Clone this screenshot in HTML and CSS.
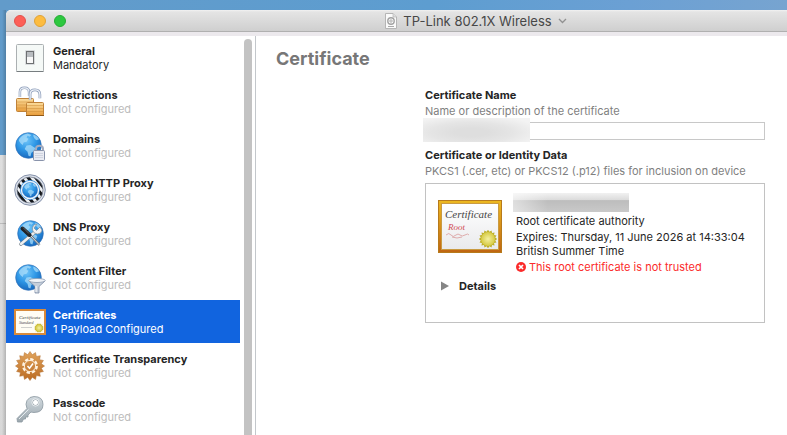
FILE: index.html
```
<!DOCTYPE html>
<html lang="en">
<head>
<meta charset="utf-8">
<meta name="viewport" content="width=device-width, initial-scale=1">
<title>TP-Link 802.1X Wireless</title>
<link rel="stylesheet" href="styles.css">
</head>
<body>
<svg class="defs" width="0" height="0" aria-hidden="true">
  <defs>
    <radialGradient id="ocean" cx=".42" cy=".3" r=".75"><stop offset="0" stop-color="#6fc4f8"/><stop offset=".5" stop-color="#2e97e6"/><stop offset="1" stop-color="#1462b8"/></radialGradient>
    <linearGradient id="brass" x2="0" y2="1"><stop offset="0" stop-color="#fbdc9c"/><stop offset="1" stop-color="#e89c3a"/></linearGradient>
    <linearGradient id="bronze" x2="0" y2="1"><stop offset="0" stop-color="#e0a35c"/><stop offset="1" stop-color="#bb6c24"/></linearGradient>
    <linearGradient id="gold" x2="0" y2="1"><stop offset="0" stop-color="#edb920"/><stop offset="1" stop-color="#bf6412"/></linearGradient>
    <linearGradient id="paper" x2="0" y2="1"><stop offset="0" stop-color="#fff"/><stop offset="1" stop-color="#e9eaec"/></linearGradient>
    <linearGradient id="steel" x2="0" y2="1"><stop offset="0" stop-color="#d2dadf"/><stop offset="1" stop-color="#9aa6ad"/></linearGradient>
    <radialGradient id="seal"><stop offset="0" stop-color="#f4f0a0"/><stop offset="1" stop-color="#d6ca44"/></radialGradient>
    <clipPath id="disc"><circle cx="16" cy="16" r="13"/></clipPath>
    <symbol id="globe" viewBox="0 0 28 28">
      <circle cx="14" cy="14" r="13.3" fill="url(#ocean)" stroke="#2f70b8" stroke-width=".7"/>
      <path d="M4.500 7Q8 2.500 13 1.500L17 3l-2 2-2-1-1 2 2 1-2 3-3 1-1 2.500-2-1.500-2-3ZM19 2.500q4 1 6 5l-3 1-2-2-1-2ZM12 14l4-.5 5 3-1 3-3 2-1 4-2-1-1-4-3-3Z" fill="#a9dcfa" opacity=".75"/>
    </symbol>
    <symbol id="shackle" viewBox="0 0 18 20">
      <path d="M3.500 13V7Q3.500 2 9 2t5.500 5.500v4" fill="none" stroke="#8a9bb8" stroke-width="3"/>
      <path d="M3.500 13V7Q3.500 2 9 2t5.500 5.500v4" fill="none" stroke="#eef2f8" stroke-width="1.400"/>
    </symbol>
    <symbol id="rosette" viewBox="-16 -16 32 32">
      <path d="M15.500 0L12.100 2.400 14.300 5.900 10.200 6.800 11 11 6.800 10.200 5.900 14.300 2.400 12.100 0 15.500-2.400 12.100-5.900 14.300-6.800 10.200-11 11-10.200 6.800-14.300 5.900-12.100 2.400-15.500 0-12.100-2.400-14.300-5.900-10.200-6.800-11-11-6.800-10.200-5.900-14.300-2.400-12.100 0-15.500 2.400-12.100 5.900-14.300 6.800-10.200 11-11 10.200-6.800 14.300-5.900 12.100-2.400Z"/>
    </symbol>
  </defs>
</svg>
<div class="desktop">
<div class="window">
  <header class="titlebar">
    <div class="lights">
      <button class="light close" aria-label="Close"></button>
      <button class="light minimise" aria-label="Minimise"></button>
      <button class="light zoom" aria-label="Zoom"></button>
    </div>
    <button class="document">
      <svg width="12" height="16" viewBox="0 0 12 16" aria-hidden="true"><path d="M.5.500h7.500l3.500 3.500v11.500H.500Z" fill="#fafafa" stroke="#b5b5b5"/><path d="M8 .5V4h3.500" fill="#ddd" stroke="#b5b5b5" stroke-width=".7"/><circle cx="6" cy="8" r="3.200" fill="none" stroke="#a2a2a2" stroke-width="1.400"/><circle cx="6" cy="8" r="1.200" fill="#fff" stroke="#999" stroke-width=".8"/><path d="M3 13.500h6" stroke="#aaa"/></svg>
      <span>TP-Link 802.1X Wireless</span>
      <svg width="9" height="6" viewBox="0 0 9 6" aria-hidden="true"><path d="M1 1l3.500 3.500L8 1" fill="none" stroke="#919191" stroke-width="1.300"/></svg>
    </button>
  </header>
  <div class="content">
    <nav class="sidebar" aria-label="Payloads">
      <div class="payloads">
        <button class="payload configured">
          <svg width="32" height="32" viewBox="0 0 32 32" aria-hidden="true"><rect x="2.500" y="2.500" width="27" height="27" rx="1" fill="#f5f9f7" stroke="#abb0b2"/><path d="M2.500 29.500h27" stroke="#777d80"/><rect x="11" y="8" width="10" height="15" rx="1" fill="#d9dcde"/><rect x="12.500" y="9.500" width="7" height="12" fill="#f8f8f8" stroke="#6d7072"/><path d="M13 10h6v5h-6Z" fill="#b9bdc1"/></svg>
          <span class="label"><strong>General</strong><span class="status">Mandatory</span></span>
        </button>
        <button class="payload">
          <svg width="32" height="32" viewBox="0 0 32 32" aria-hidden="true"><use href="#shackle" x="3" y="0" width="15" height="17"/><rect x="2.500" y="12.500" width="17" height="13" rx="1" fill="url(#brass)" stroke="#c08238"/><path d="M3 16h16M3 19h16M3 22h16" stroke="#c98730" opacity=".45"/><use href="#shackle" x="13" y="2" width="16" height="18"/><rect x="12.500" y="16.500" width="17" height="13" rx="1" fill="url(#brass)" stroke="#c08238"/><path d="M13 19.500h16M13 22.500h16M13 25.500h16" stroke="#c98730" opacity=".45"/><path d="M12 29.500h18" stroke="#925917"/></svg>
          <span class="label"><strong>Restrictions</strong><span class="status">Not configured</span></span>
        </button>
        <button class="payload">
          <svg width="32" height="32" viewBox="0 0 32 32" aria-hidden="true"><use href="#globe" x="1" y="2" width="27" height="27"/><path d="M22 22v-3.500q0-2.800 3.500-2.800T29 18.500V22" fill="none" stroke="#a4acbf" stroke-width="2"/><rect x="19.500" y="20.500" width="11" height="10" rx="1" fill="#e9ebf2" stroke="#8993ab"/><path d="M21 23.500h8M21 25.500h8M21 27.500h8" stroke="#c9cedb" stroke-width=".8"/></svg>
          <span class="label"><strong>Domains</strong><span class="status">Not configured</span></span>
        </button>
        <button class="payload">
          <svg width="32" height="32" viewBox="0 0 32 32" aria-hidden="true"><circle cx="16" cy="16" r="15.300" fill="#dbe0e9" stroke="#7b88a3" stroke-width=".9"/><circle cx="16" cy="16" r="13" fill="#eef1f4"/><path d="M-4 0L28 40M2-2L34 38M8-4L40 36M-10 2L22 42M14-6L46 34" stroke="#15181c" stroke-width="3" clip-path="url(#disc)"/><circle cx="16" cy="16" r="13" fill="none" stroke="#6a7384" stroke-width=".7"/><circle cx="16" cy="16" r="10" fill="#3a93e2"/><circle cx="16" cy="16" r="9.200" fill="#f0f7fd"/><use href="#globe" x="8" y="8" width="16" height="16"/></svg>
          <span class="label"><strong>Global HTTP Proxy</strong><span class="status">Not configured</span></span>
        </button>
        <button class="payload">
          <svg width="32" height="32" viewBox="0 0 32 32" aria-hidden="true"><use href="#globe" x="3" y="2" width="27" height="27"/><path d="M7 26L21 14" stroke="#737e89" stroke-width="3.600" stroke-linecap="round"/><path d="M7 26L21 14" stroke="#edf0f2" stroke-width="2.400" stroke-linecap="round"/><path d="M26 9l-3.500 3.500-2.500-2.500 3-4q-5 .5-4.500 6 1 4 5 4t4.500-4Z" fill="#eff2f4" stroke="#818c96" stroke-width=".7"/><path d="M16 17l9.500 10" stroke="#66727e" stroke-width="2.500"/><path d="M16 17l9.500 10" stroke="#e0e5e9"/><path d="M8.500 10.500l7 6.500" stroke="#202327" stroke-width="4" stroke-linecap="round"/><path d="M9 9.500l6 6" stroke="#65696e" stroke-width="1"/></svg>
          <span class="label"><strong>DNS Proxy</strong><span class="status">Not configured</span></span>
        </button>
        <button class="payload">
          <svg width="32" height="32" viewBox="0 0 32 32" aria-hidden="true"><use href="#globe" x="1" y="2" width="27" height="27"/><path d="M15 19l6 5.500v6.500h4v-6.500l6-5.500Z" fill="#c6cfdb" stroke="#7b8ba5" stroke-width=".8"/><ellipse cx="23" cy="18.500" rx="8.300" ry="2" fill="#f0f3f7" stroke="#8a9ab0" stroke-width=".8"/><path d="M22 24v6" stroke="#fff"/></svg>
          <span class="label"><strong>Content Filter</strong><span class="status">Not configured</span></span>
        </button>
        <button class="payload selected" aria-current="page">
          <svg width="32" height="32" viewBox="0 0 32 32" aria-hidden="true"><rect x="0" y="3" width="32" height="26" fill="#d88a3a"/><rect x="2" y="5" width="28" height="22" fill="#fffdf4"/><text class="script" x="5" y="13" font-size="5">Certificate</text><text class="script" x="5" y="18" font-size="4">Standard</text><path d="M7 21.500h11" stroke="#bbb" stroke-width=".7"/><use href="#rosette" x="20" y="17" width="10" height="10" fill="#c9bb36"/><circle cx="25" cy="22" r="3.200" fill="url(#seal)"/></svg>
          <span class="label"><strong>Certificates</strong><span class="status">1 Payload Configured</span></span>
        </button>
        <button class="payload">
          <svg width="32" height="32" viewBox="0 0 32 32" aria-hidden="true"><use href="#rosette" x="1" y="1" width="30" height="30" fill="url(#bronze)" stroke="#b06c2a" stroke-width=".5"/><circle cx="16" cy="16" r="6.800" fill="none" stroke="#fff3e2" stroke-width="2.200" stroke-dasharray="3.400 1.940"/><circle cx="16" cy="16" r="5.600" fill="none" stroke="#fff3e2" stroke-width=".9"/><path d="M13.500 16l2 2.200 3.500-4.700" fill="none" stroke="#fff" stroke-width="1.500"/></svg>
          <span class="label"><strong>Certificate Transparency</strong><span class="status">Not configured</span></span>
        </button>
        <button class="payload">
          <svg width="32" height="32" viewBox="0 0 32 32" aria-hidden="true"><path fill-rule="evenodd" d="M20 2.500q9 0 9 8t-9 8q-1.500 0-3-.5l-3 3v2h-2.500v2H9.500L8 28H3.500L3 24.500l10-10Q11 10 13 6.500q2.500-4 7-4ZM21.500 5.500a3 3 0 1 0 .1 0Z" fill="url(#steel)" stroke="#8a979f" stroke-width=".8"/><path d="M5 25L14.500 15.500" stroke="#e6ecef" stroke-width="1"/><circle cx="21.500" cy="8.500" r="3.600" fill="none" stroke="#f1f4f5" stroke-width=".8"/></svg>
          <span class="label"><strong>Passcode</strong><span class="status">Not configured</span></span>
        </button>
      </div>
      <div class="scrollbar"></div>
    </nav>
    <main class="detail">
      <h1>Certificate</h1>
      <div class="form">
        <label for="cert-name">Certificate Name</label>
        <p class="hint">Name or description of the certificate</p>
        <div class="field"><input id="cert-name" type="text"><span class="redaction"></span></div>
        <h2>Certificate or Identity Data</h2>
        <p class="hint">PKCS1 (.cer, etc) or PKCS12 (.p12) files for inclusion on device</p>
        <section class="card">
          <svg class="diploma" width="64" height="53" viewBox="0 0 64 53" aria-hidden="true"><rect width="64" height="53" fill="url(#gold)"/><rect x=".5" y=".5" width="63" height="52" fill="none" stroke="#b77a1b"/><rect x="3.500" y="3.500" width="57" height="46" fill="url(#paper)" stroke="#c99b42"/><text class="script" x="7" y="18" font-size="11">Certificate</text><text class="script root" x="10" y="30" font-size="9">Root</text><path d="M8 35q3-3 5 0t5 0q2-2 4 0t5 0 4 0M14 37q5 2 10 0" fill="none" stroke="#d99a9a" stroke-width=".8"/><use href="#rosette" x="40.500" y="29.500" width="19" height="19" fill="#bcae2a"/><circle cx="50" cy="39" r="7" fill="url(#seal)"/></svg>
          <div class="info">
            <div class="subject"></div>
            <p>Root certificate authority</p>
            <p>Expires: Thursday, 11 June 2026 at 14:33:04 British Summer Time</p>
            <p class="warning"><svg width="10" height="10" viewBox="0 0 10 10" aria-hidden="true"><circle cx="5" cy="5" r="5" fill="#fb2b2b"/><path d="M3 3l4 4M7 3L3 7" stroke="#fff" stroke-width="1.700"/></svg>This root certificate is not trusted</p>
          </div>
          <button class="details" aria-expanded="false"><svg width="8" height="10" viewBox="0 0 8 10" aria-hidden="true"><path d="M0 .5L8 5 0 9.500Z" fill="#858585"/></svg>Details</button>
        </section>
      </div>
    </main>
  </div>
</div>
</div>
</body>
</html>
```
FILE: styles.css
```
* { box-sizing: border-box; }
body { margin: 0; font: 11px/14px Inter, "Liberation Sans", sans-serif; color: #252525; }
p, h1, h2 { margin: 0; }
button { border: 0; padding: 0; background: none; font: inherit; color: inherit; text-align: left; }
svg { display: block; flex: none; }
.defs { position: absolute; }
.desktop {
  height: 100vh;
  overflow: hidden;
  padding: 10px 0 0 6px;
  background:
    linear-gradient(90deg, rgba(0,0,0,0) 2px, rgba(0,0,0,.18) 6px) 0 10px / 6px 100% no-repeat,
    linear-gradient(#bbb, #bbb) 0 223px / 6px 1px no-repeat,
    linear-gradient(#dedede, #d5d5d5) 0 155px / 6px 100% no-repeat,
    linear-gradient(90deg, #629bca, #5d9dd0 55%, #6ba0d4 80%, #77a4d0);
}
.window { display: flex; flex-direction: column; height: 100%; border-radius: 5px 0 0 0; overflow: hidden; background: #fff; }
.titlebar {
  display: flex;
  flex: none;
  height: 26px;
  border-bottom: 4px solid #ece9ed;
  background: linear-gradient(#f2f2f2, #e4e4e4 2px, #cfcfcf 21px, #b0b0b0 21px);
}
.lights { display: flex; align-items: center; gap: 8px; flex: 0 0 159px; padding-left: 8px; }
.light { width: 12px; height: 12px; border-radius: 50%; border: 1px solid; }
.close { background: #fd5f57; border-color: #e2504a; }
.minimise { background: #fdbc40; border-color: #dfa236; }
.zoom { background: #2dc840; border-color: #26ab35; }
.document { display: flex; flex: 1; align-items: center; justify-content: center; gap: 6px; font-size: 13px; line-height: 20px; color: #474747; }
.content { display: flex; flex: 1; min-height: 0; }
.sidebar { display: flex; flex: 0 0 250px; gap: 4px; border-right: 1px solid #c3c7cb; overflow: hidden; }
.payloads { flex: 1; min-width: 0; }
.scrollbar { width: 8px; margin: 3px 3px 0 0; border-radius: 4px 4px 0 0; background: #c3c3c3; }
.payload { display: flex; align-items: center; gap: 7px; width: 100%; height: 43px; padding-left: 8px; margin-bottom: 1px; }
.label, .label strong, .status { display: block; white-space: nowrap; }
.status { color: #bcbcbc; }
.configured .status { color: #252525; }
.selected { background: #1164df; color: #fff; }
.selected .status { color: #fff; }
.script { font-family: "Liberation Serif", serif; font-style: italic; fill: #454545; }
.root { fill: #d14b51; }
.detail { display: flex; flex-direction: column; flex: 1; padding: 12px 22px 0 20px; }
h1 { font-size: 18px; line-height: 22px; color: #777; }
.form { margin: 18px 0 0 149px; }
label, h2 { display: block; font-size: 11px; line-height: 14px; font-weight: 700; }
.hint { margin-top: 2px; color: #7f7f7f; white-space: nowrap; }
.field { position: relative; margin: 4px 0 8px; }
input { display: block; width: 100%; height: 18px; border: 1px solid #c8c8c8; padding: 0 4px; font: inherit; background: #fff; }
.redaction { position: absolute; left: -2px; top: -4px; width: 107px; height: 24px; background: radial-gradient(ellipse at 45% 60%, #dedede 20%, #e5e5e5 50%, #f3f3f3 85%); }
.card {
  display: grid;
  grid-template-columns: 64px 1fr;
  column-gap: 14px;
  min-height: 140px;
  margin-top: 5px;
  padding: 9px 12px;
  border: 1px solid #c2c2c2;
  align-content: start;
}
.diploma { margin-top: 7px; }
.info p { margin-top: 2px; }
.subject { width: 116px; height: 19px; margin-left: -3px; background: linear-gradient(90deg, rgba(255,255,255,.5), rgba(255,255,255,0) 30%), linear-gradient(#f1f1f1, #dcdcdc 35%, #bdbdbd 40%, #c9c9c9); }
.info .warning { display: flex; align-items: center; gap: 3px; color: #fb2b2b; }
.details { display: flex; align-items: center; gap: 10px; margin: 5px 0 0 3px; font-weight: 700; }
```
